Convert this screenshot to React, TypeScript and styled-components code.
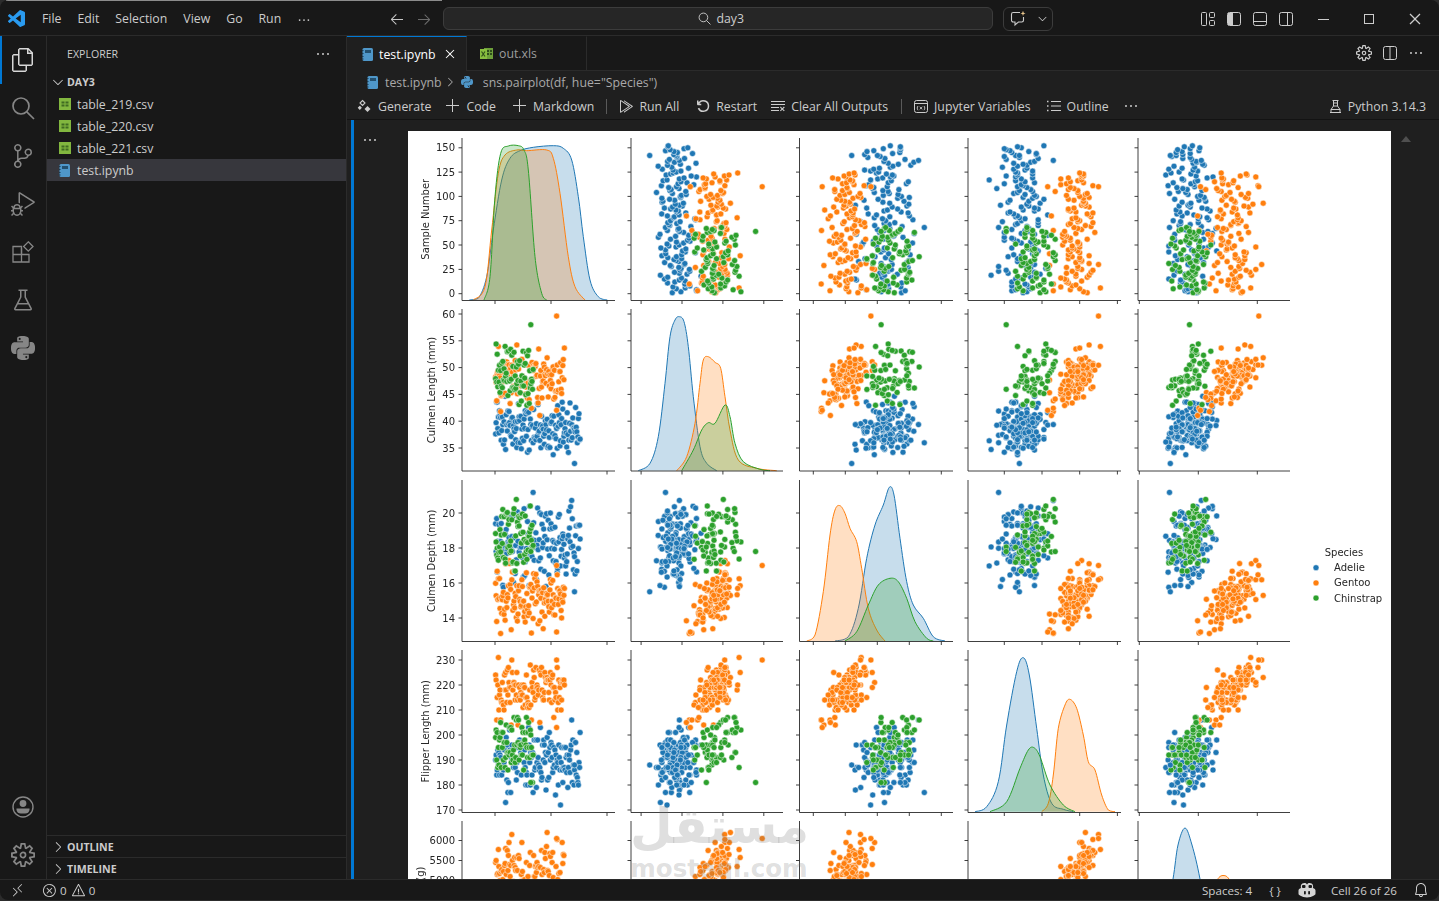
import React from 'react';
import styled, { createGlobalStyle } from 'styled-components';
import {
  VscAdd,
  VscArrowLeft,
  VscArrowRight,
  VscBeaker,
  VscBell,
  VscChevronDown,
  VscChevronRight,
  VscChromeClose,
  VscChromeMaximize,
  VscChromeMinimize,
  VscClearAll,
  VscClose,
  VscDebugAlt,
  VscDebugRestart,
  VscEllipsis,
  VscError,
  VscFiles,
  VscRemote,
  VscRunAll,
  VscSettingsGear,
  VscSourceControl,
  VscWarning,
} from 'react-icons/vsc';
import { SiPython } from 'react-icons/si';

const UI_FONT = '"Open Sans", "Noto Sans", sans-serif';

const GlobalStyle = createGlobalStyle`
  html, body {
    margin: 0;
    height: 100%;
    overflow: hidden;
    background: #2c2c2c;
  }
  #root {
    height: 100%;
  }
`;

const Window = styled.div`
  position: relative;
  display: flex;
  flex-direction: column;
  height: 900px;
  background: #181818;
  border-radius: 8px;
  overflow: hidden;
  font-family: ${UI_FONT};
  font-size: 12.3px;
  color: #cccccc;
`;

const TopGlint = styled.div`
  position: absolute;
  top: 0;
  left: 6px;
  width: 436px;
  height: 1px;
  background: #8c8c8c;
`;

const TitleBar = styled.header`
  display: flex;
  align-items: center;
  flex: 0 0 36px;
  box-sizing: border-box;
  padding-top: 2px;
  border-bottom: 1px solid #2b2b2b;
  position: relative;
`;

const AppLogo = styled.svg`
  width: 17px;
  height: 17px;
  margin: 0 9px 0 8px;
  fill: #2a9bf0;
`;

const MenuItem = styled.span`
  padding: 0 8px;
  line-height: 33px;
  white-space: nowrap;
`;

const NavArrows = styled.div`
  display: flex;
  align-items: center;
  gap: 11px;
  margin-left: 70px;
  width: 49px;
  flex-shrink: 0;
`;

const NavArrow = styled.span<{ dim?: boolean }>`
  display: flex;
  color: ${(p) => (p.dim ? '#6b6b6b' : '#c8c8c8')};
`;

const CommandCenter = styled.div`
  display: flex;
  align-items: center;
  justify-content: center;
  gap: 5px;
  flex: 0 0 550px;
  height: 23px;
  margin-left: 5px;
  padding-left: 6px;
  box-sizing: border-box;
  background: #262626;
  border: 1px solid #3c3c3c;
  border-radius: 6px;
  color: #cccccc;
`;

const ChatButton = styled.div`
  display: flex;
  align-items: center;
  gap: 9px;
  flex: 0 0 50px;
  height: 24px;
  margin-left: 10px;
  padding-left: 6px;
  box-sizing: border-box;
  border: 1px solid #3c3c3c;
  border-radius: 6px;
  color: #cccccc;
`;

const LayoutIcons = styled.div`
  display: flex;
  align-items: center;
  gap: 10px;
  margin-left: auto;
`;

const WindowControls = styled.div`
  display: flex;
  margin: 0 1px 0 6px;
  color: #cccccc;
`;

const WindowControl = styled.span`
  display: flex;
  align-items: center;
  justify-content: center;
  width: 46px;
  height: 33px;
`;

const Main = styled.div`
  display: flex;
  flex: 1;
  min-height: 0;
`;

const ActivityBar = styled.nav`
  display: flex;
  flex-direction: column;
  flex: 0 0 47px;
  box-sizing: border-box;
  border-right: 1px solid #2b2b2b;
`;

const ActivityItem = styled.div<{ active?: boolean }>`
  display: flex;
  align-items: center;
  justify-content: center;
  height: 48px;
  box-sizing: border-box;
  color: ${(p) => (p.active ? '#d7d7d7' : '#868686')};
  border-left: 2px solid ${(p) => (p.active ? '#0078d4' : 'transparent')};
  padding-right: 2px;
`;

const ActivitySpacer = styled.div`
  flex: 1;
`;

const SideBar = styled.aside`
  display: flex;
  flex-direction: column;
  flex: 0 0 300px;
  box-sizing: border-box;
  border-right: 1px solid #2b2b2b;
`;

const SideHeader = styled.div`
  display: flex;
  align-items: center;
  justify-content: space-between;
  height: 35px;
  padding: 0 15px 0 20px;
  font-size: 10.6px;
`;

const FolderRow = styled.div`
  display: flex;
  align-items: center;
  gap: 1px;
  height: 22px;
  padding-left: 3px;
  font-size: 10.6px;
  font-weight: 700;
`;

const FileRow = styled.div<{ selected?: boolean }>`
  display: flex;
  align-items: center;
  gap: ${(p) => (p.selected ? 7 : 6)}px;
  height: 22px;
  padding-left: 12px;
  background: ${(p) => (p.selected ? '#37373d' : 'transparent')};
`;

const SideFill = styled.div`
  flex: 1;
`;

const PaneHeader = styled.div`
  display: flex;
  align-items: center;
  gap: 1px;
  height: 22px;
  box-sizing: border-box;
  padding-left: 3px;
  border-top: 1px solid #2b2b2b;
  font-size: 10.6px;
  font-weight: 700;
`;

const Editor = styled.section`
  display: flex;
  flex-direction: column;
  flex: 1;
  min-width: 0;
  background: #1f1f1f;
`;

const TabBar = styled.div`
  display: flex;
  flex: 0 0 35px;
  box-sizing: border-box;
  background: #181818;
  border-bottom: 1px solid #2b2b2b;
`;

const Tab = styled.div<{ active?: boolean; width: number }>`
  display: flex;
  align-items: center;
  gap: 6px;
  width: ${(p) => p.width}px;
  box-sizing: border-box;
  padding-left: ${(p) => (p.active ? 15 : 13)}px;
  margin-bottom: ${(p) => (p.active ? -1 : 0)}px;
  background: ${(p) => (p.active ? '#1f1f1f' : '#181818')};
  color: ${(p) => (p.active ? '#ffffff' : '#9d9d9d')};
  border-top: 1px solid ${(p) => (p.active ? '#0078d4' : 'transparent')};
  border-right: 1px solid #2b2b2b;
`;

const TabActions = styled.div`
  display: flex;
  align-items: center;
  gap: 10px;
  margin-left: auto;
  padding-right: 15px;
  color: #cccccc;
`;

const Breadcrumbs = styled.div`
  display: flex;
  align-items: center;
  flex: 0 0 22px;
  padding-left: 20px;
  gap: 7px;
  color: #a9a9a9;
`;

const CrumbChevron = styled.span`
  display: flex;
  margin: 0 -3px 0 -6px;
`;

const ToolbarWrap = styled.div`
  display: flex;
  align-items: center;
  flex: 0 0 27px;
  box-sizing: border-box;
  padding: 0 13px 0 10px;
  border-bottom: 1px solid #131313;
`;

const ToolButton = styled.div<{ gap?: number }>`
  display: flex;
  align-items: center;
  gap: 5px;
  margin-right: ${(p) => p.gap ?? 15}px;
  white-space: nowrap;
`;

const ToolSeparator = styled.span`
  width: 1px;
  height: 15px;
  margin-right: 11px;
  background: #5a5a5a;
`;

const KernelPicker = styled(ToolButton)`
  margin-left: auto;
  margin-right: 0;
`;

const NotebookBody = styled.div`
  display: flex;
  flex: 1;
  min-height: 0;
`;

const CellBar = styled.div`
  flex: 0 0 3px;
  margin-left: 4px;
  background: #0078d4;
`;

const CellGutter = styled.div`
  display: flex;
  justify-content: center;
  flex: 0 0 54px;
  padding-top: 12px;
  padding-right: 23px;
  box-sizing: border-box;
  color: #cccccc;
`;

const Output = styled.div`
  position: relative;
  flex: 0 0 983px;
  margin-top: 11px;
  background: #ffffff;
  overflow: hidden;
`;

const PlotSvg = styled.svg`
  display: block;
  filter: blur(0.35px);
`;

const Watermark = styled.div`
  position: absolute;
  left: 222px;
  top: 664px;
  width: 178px;
  text-align: center;
  font-family: "DejaVu Sans", sans-serif;
  font-weight: 700;
  color: rgba(120, 120, 120, 0.24);
  pointer-events: none;
`;

const WatermarkArabic = styled.div`
  font-size: 49px;
  line-height: 64px;
`;

const WatermarkLatin = styled.div`
  font-size: 24.5px;
  line-height: 20px;
`;

const ScrollArrow = styled.div`
  width: 0;
  height: 0;
  margin: 16px 0 0 10px;
  border-left: 5px solid transparent;
  border-right: 5px solid transparent;
  border-bottom: 6px solid #4f4f4f;
`;

const StatusBar = styled.footer`
  display: flex;
  align-items: center;
  flex: 0 0 21px;
  box-sizing: border-box;
  border-top: 1px solid #2b2b2b;
  padding: 0 10px;
  font-size: 11.6px;
`;

const StatusItem = styled.span<{ gap?: number }>`
  display: flex;
  align-items: center;
  gap: 3px;
  margin-right: ${(p) => p.gap ?? 0}px;
`;

const StatusRight = styled.div`
  display: flex;
  align-items: center;
  margin-left: auto;
`;

const TickLabel = styled.text<{ anchor?: string }>`
  font-family: "DejaVu Sans", sans-serif;
  font-size: 10px;
  fill: #262626;
  text-anchor: ${(p) => p.anchor ?? 'end'};
`;

// file type icons seen in the explorer and tabs
const CsvIcon = () => (
  <svg width="12" height="12" viewBox="0 0 12 12">
    <rect width="12" height="12" fill="#82b73f" />
    <path d="M2.5 3.5h3v2h-3zM6.5 3.5h3v2h-3zM2.5 6.5h3v2h-3zM6.5 6.5h3v2h-3z" fill="#3f6b22" />
  </svg>
);

const XlsIcon = () => (
  <svg width="13" height="13" viewBox="0 0 13 13">
    <rect x="4" y="1" width="9" height="11" fill="#6d9f3a" />
    <path d="M7 3h2v2H7zM10 3h2v2h-2zM7 6h2v2H7zM10 6h2v2h-2z" fill="#2f4f1b" />
    <rect x="0" y="2" width="7" height="10" fill="#89bf3f" />
    <path d="M1.5 4.5l3.5 5M5 4.5l-3.5 5" stroke="#2f4f1b" strokeWidth="1.2" />
  </svg>
);

const NotebookIcon = () => (
  <svg width="11" height="13" viewBox="0 0 11 13">
    <rect x="0.5" width="10.5" height="13" rx="1.5" fill="#4f97c9" />
    <rect x="3" y="2" width="6" height="3" fill="#23506f" />
    <path d="M0 2.5h1.5M0 5.5h1.5M0 8.5h1.5M0 11h1.5" stroke="#1b3a50" />
  </svg>
);

const SearchIcon: React.FC<{ size: number }> = ({ size }) => (
  <svg width={size} height={size} viewBox="0 0 24 24" fill="none" stroke="currentColor" strokeWidth="1.7">
    <circle cx="10" cy="10" r="8" />
    <path d="M15.800 15.800L23 23" />
  </svg>
);

const ExtensionsIcon = () => (
  <svg width="24" height="24" viewBox="0 0 24 24" fill="none" stroke="currentColor" strokeWidth="1.3">
    <path d="M2 6.500h8.500V22H2zM2 14.500h16V22h-7.500" />
    <path d="M10.500 14.500V8" />
    <path d="M17.300 1.800l4.700 4.700-4.700 4.700-4.700-4.700z" />
  </svg>
);

const AccountIcon = () => (
  <svg width="24" height="24" viewBox="0 0 24 24">
    <circle cx="12" cy="12" r="10" fill="none" stroke="currentColor" strokeWidth="1.4" />
    <circle cx="12" cy="8.500" r="3.400" fill="currentColor" />
    <path d="M5.500 13.500h13v1.500a4.500 4.500 0 0 1-4.500 3.500h-4A4.500 4.500 0 0 1 5.500 15z" fill="currentColor" />
  </svg>
);

const CustomizeLayoutIcon = () => (
  <svg width="16" height="16" viewBox="0 0 16 16" fill="none" stroke="#cccccc">
    <rect x="1.5" y="1.5" width="5" height="13" rx="1" />
    <rect x="9.5" y="1.5" width="5" height="5" rx="1" />
    <rect x="9.5" y="9.5" width="5" height="5" rx="1" />
  </svg>
);

const SidebarLayoutIcon = () => (
  <svg width="16" height="16" viewBox="0 0 16 16" fill="none" stroke="#cccccc">
    <rect x="1.5" y="1.5" width="13" height="13" rx="2" />
    <path d="M2 2h5v12H2z" fill="#cccccc" stroke="none" />
  </svg>
);

const PanelLayoutIcon = () => (
  <svg width="16" height="16" viewBox="0 0 16 16" fill="none" stroke="#cccccc">
    <rect x="1.5" y="1.5" width="13" height="13" rx="2" />
    <path d="M2 10.5h12" />
  </svg>
);

const SecondaryLayoutIcon = () => (
  <svg width="16" height="16" viewBox="0 0 16 16" fill="none" stroke="#cccccc">
    <rect x="1.5" y="1.5" width="13" height="13" rx="2" />
    <path d="M9.5 2v12" />
  </svg>
);

const SplitEditorIcon = () => (
  <svg width="16" height="16" viewBox="0 0 16 16" fill="none" stroke="#cccccc">
    <rect x="1.5" y="1.5" width="13" height="13" rx="2" />
    <path d="M8 2v12" />
  </svg>
);

const ChatIcon = () => (
  <svg width="17" height="17" viewBox="0 0 17 17" fill="none" stroke="#cccccc" strokeWidth="1.1">
    <path d="M10 2.5H3.2A1.7 1.7 0 0 0 1.5 4.2v6.1A1.7 1.7 0 0 0 3.2 12H5v3l3.4-3h3.4a1.7 1.7 0 0 0 1.7-1.7V7" />
    <path d="M13 .8l.7 1.9 1.9.7-1.9.7-.7 1.9-.7-1.9-1.9-.7 1.9-.7z" fill="#e8c58c" stroke="none" />
  </svg>
);

const GenerateIcon = () => (
  <svg width="16" height="16" viewBox="0 0 16 16" fill="none" stroke="#cccccc" strokeWidth="1.1">
    <path d="M5.5 2.5l2.5 2.5-2.5 2.5L3 5z" />
    <path d="M2.8 8.5l1.3 1.3-1.3 1.3-1.3-1.3z" fill="#cccccc" />
    <path d="M10.5 8l3 3-3 3-3-3z" fill="#cccccc" stroke="none" />
  </svg>
);

const VariablesIcon = () => (
  <svg width="16" height="15" viewBox="0 0 15 15" fill="none" stroke="#cccccc">
    <rect x="1" y="1.5" width="13" height="12" rx="2" />
    <path d="M1 4.5h13" />
    <path d="M4.5 7c-1 1.2-1 3 0 4.2M10.5 7c1 1.2 1 3 0 4.2M6.2 7.8l2.6 2.6M8.8 7.8l-2.6 2.6" strokeWidth="0.9" />
  </svg>
);

const OutlineIcon = () => (
  <svg width="16" height="16" viewBox="0 0 16 16" fill="none" stroke="#cccccc">
    <path d="M5 3.500h10M5 8h10M5 12.500h10" />
    <path d="M1 3.500h1.500M1 8h1.500M1 12.500h1.500" strokeWidth="1.500" />
  </svg>
);

const KernelIcon = () => (
  <svg width="15" height="15" viewBox="0 0 15 15" fill="none" stroke="#cccccc">
    <path d="M4.5 1.5h6M5.5 1.5v5.5L3 10.5M9.5 1.5v5.5l2.5 3.5M2 13.5h11M3 10.5h9v3H3zM5.5 4h4M5.5 7h4" />
  </svg>
);

const BotIcon = () => (
  <svg width="18" height="16" viewBox="0 0 18 16">
    <path d="M3 6c-.5-2 0-5 3.500-5 1.500 0 2 .6 2.500 1.500C9.500 1.600 10 1 11.500 1 15 1 15.500 4 15 6c1.500.6 2.500 1.500 2.500 2.500v3c0 1-.6 1.500-1.500 2C14 14.600 11.500 15.500 9 15.500s-5-.9-7-2c-.9-.5-1.500-1-1.500-2v-3C.5 7.500 1.500 6.600 3 6z" fill="#d4d4d4" />
    <rect x="4" y="3" width="3.500" height="3" rx="1" fill="#181818" />
    <rect x="10.500" y="3" width="3.500" height="3" rx="1" fill="#181818" />
    <rect x="6" y="9" width="1.800" height="3.500" rx=".8" fill="#181818" />
    <rect x="10.200" y="9" width="1.800" height="3.500" rx=".8" fill="#181818" />
  </svg>
);

// seeded generator so the scatter clouds stay the same between renders
const makeRandom = (seed: number) => {
  let s = seed;
  return () => {
    s = (s + 0x6d2b79f5) | 0;
    let t = Math.imul(s ^ (s >>> 15), 1 | s);
    t = (t + Math.imul(t ^ (t >>> 7), 61 | t)) ^ t;
    return ((t ^ (t >>> 14)) >>> 0) / 4294967296;
  };
};

const random = makeRandom(2718);
const gauss = () =>
  Math.sqrt(-2 * Math.log(random() + 1e-9)) * Math.cos(2 * Math.PI * random());

interface Sample {
  species: number;
  values: number[];
}

const between = (mean: number, sd: number, load: number, z: number, lo: number, hi: number) => {
  for (let i = 0; i < 20; i++) {
    const v = mean + sd * (load * z + Math.sqrt(1 - load * load) * gauss());
    if (v >= lo && v <= hi) return v;
  }
  return mean;
};

const samples: Sample[] = [];

for (let i = 1; i <= 152; i += 1) {
  const z = gauss();
  samples.push({
    species: 0,
    values: [
      i,
      between(39, 3, 0.45, z, 33.5, 46),
      between(18.3, 1.2, 0.55, z, 15.7, 21.5),
      Math.round(between(190, 6.6, 0.5, z, 172, 210)),
      Math.round(between(3700, 460, 0.75, z, 2850, 4775) / 25) * 25,
    ],
  });
}
for (let i = 1; i <= 124; i += 1) {
  const z = gauss();
  samples.push({
    species: 1,
    values: [
      i,
      between(47.4, 3, 0.75, z, 40.9, 55.9),
      between(15, 1, 0.8, z, 13.1, 17.3),
      Math.round(between(217, 6.4, 0.8, z, 203, 231)),
      Math.round(between(5070, 500, 0.85, z, 3950, 6300) / 25) * 25,
    ],
  });
}
for (let i = 1; i <= 68; i += 1) {
  const male = i % 2 === 0;
  const z = gauss() * 0.7 + (male ? 0.7 : -0.7);
  samples.push({
    species: 2,
    values: [
      i,
      between(male ? 51 : 46.5, 1.7, 0.1, z, 40.9, 55),
      between(18.4, 1.1, 0.75, z, 16.4, 20.8),
      Math.round(between(196, 6.5, 0.7, z, 178, 212)),
      Math.round(between(3730, 380, 0.75, z, 2700, 4800) / 25) * 25,
    ],
  });
}
samples.push({ species: 1, values: [110, 59.6, 17, 230, 6050] });
samples.push({ species: 2, values: [64, 58, 17.8, 181, 3700] });
samples.push({ species: 0, values: [142, 32.1, 15.5, 188, 3050] });

const colors = ['#1f77b4', '#ff7f0e', '#2ca02c'];

// every column/row of the grid: screen box, value scale and tick values
const axes = [
  {
    label: 'Sample Number',
    labelX: 425,
    left: 462,
    right: 615,
    top: 138,
    bottom: 300.5,
    x: (v: number) => 495 + 0.56 * v,
    y: (v: number) => 293.7 - 0.973 * v,
    xTicks: [0, 100, 200],
    yTicks: [0, 25, 50, 75, 100, 125, 150],
  },
  {
    label: 'Culmen Length (mm)',
    labelX: 431,
    left: 631,
    right: 783,
    top: 309,
    bottom: 471,
    x: (v: number) => 682 + 4.09 * (v - 40),
    y: (v: number) => 314 + (60 - v) * 5.36,
    xTicks: [30, 40, 50, 60],
    yTicks: [35, 40, 45, 50, 55, 60],
  },
  {
    label: 'Culmen Depth (mm)',
    labelX: 431,
    left: 799.5,
    right: 953,
    top: 480,
    bottom: 641.5,
    x: (v: number) => 845.3 + 12.8 * (v - 15),
    y: (v: number) => 513 + (20 - v) * 17.5,
    xTicks: [12.5, 15, 17.5, 20, 22.5],
    yTicks: [14, 16, 18, 20],
  },
  {
    label: 'Flipper Length (mm)',
    labelX: 425,
    left: 968,
    right: 1121,
    top: 650,
    bottom: 812.5,
    x: (v: number) => 1004.3 + 1.885 * (v - 180),
    y: (v: number) => 660 + (230 - v) * 2.5,
    xTicks: [180, 200, 220, 240],
    yTicks: [170, 180, 190, 200, 210, 220, 230],
  },
  {
    label: 'Body Mass (g)',
    labelX: 420,
    left: 1138,
    right: 1290,
    top: 821,
    bottom: 983,
    x: (v: number) => 1198.3 + 0.0295 * (v - 4000),
    y: (v: number) => 840.5 + (6000 - v) * 0.04,
    xTicks: [2000, 4000, 6000],
    yTicks: [3000, 3500, 4000, 4500, 5000, 5500, 6000],
  },
];

type Pt = [number, number];

const fromZoom = (ox: number, oy: number, pts: number[]): Pt[] => {
  const out: Pt[] = [];
  for (let i = 0; i < pts.length; i += 2) out.push([ox + pts[i] / 3, oy + pts[i + 1] / 3]);
  return out;
};

// density curves read off the reference, in blue, orange, green order
const kdes: Pt[][][] = [
  [
    fromZoom(410, 130, [178, 510, 205, 505, 230, 440, 250, 300, 275, 150, 300, 85, 330, 62, 370, 52, 430, 47, 460, 55, 485, 90, 505, 200, 520, 320, 540, 450, 565, 500, 592, 510]),
    fromZoom(410, 130, [190, 510, 225, 470, 245, 300, 265, 130, 285, 75, 320, 60, 350, 62, 410, 60, 430, 85, 450, 190, 475, 380, 495, 470, 525, 510]),
    fromZoom(410, 130, [222, 510, 240, 440, 255, 200, 272, 70, 295, 48, 325, 47, 342, 60, 355, 120, 375, 380, 395, 490, 410, 510]),
  ],
  [
    fromZoom(410, 130, [685, 1022, 720, 1000, 745, 920, 765, 760, 780, 620, 795, 570, 808, 560, 822, 575, 835, 650, 850, 800, 870, 950, 890, 1000, 920, 1022]),
    fromZoom(410, 130, [800, 1022, 830, 980, 855, 880, 870, 760, 880, 690, 895, 680, 915, 697, 932, 715, 945, 800, 960, 900, 985, 990, 1040, 1015, 1100, 1022]),
    fromZoom(410, 130, [815, 1022, 850, 960, 875, 900, 895, 878, 915, 880, 945, 825, 960, 860, 975, 940, 1000, 995, 1050, 1018, 1080, 1022]),
  ],
  [
    fromZoom(790, 475, [135, 498, 175, 485, 205, 400, 230, 250, 255, 150, 280, 90, 298, 37, 312, 60, 330, 190, 350, 320, 370, 390, 400, 430, 430, 485, 465, 498]),
    fromZoom(790, 475, [50, 498, 75, 480, 100, 350, 120, 180, 135, 105, 150, 92, 165, 115, 180, 160, 200, 200, 215, 280, 235, 400, 260, 465, 285, 498]),
    fromZoom(790, 475, [165, 498, 200, 470, 235, 390, 265, 330, 300, 310, 325, 320, 350, 370, 375, 440, 410, 490, 430, 498]),
  ],
  [
    fromZoom(790, 475, [555, 1010, 590, 995, 625, 920, 650, 750, 680, 590, 700, 548, 718, 600, 740, 760, 760, 900, 785, 985, 820, 1003, 850, 1010]),
    fromZoom(790, 475, [755, 1010, 775, 985, 790, 900, 805, 760, 825, 690, 840, 673, 860, 700, 880, 780, 895, 860, 915, 885, 935, 960, 955, 1005, 975, 1010]),
    fromZoom(790, 475, [600, 1010, 650, 980, 690, 880, 715, 825, 732, 818, 750, 845, 780, 930, 820, 990, 855, 1010]),
  ],
  [
    [[1150, 983], [1165, 920], [1173, 879], [1178, 845], [1185, 828], [1192, 845], [1200, 879], [1208, 930], [1222, 983]],
    [[1195, 983], [1207, 920], [1215, 885], [1223, 875.5], [1232, 885], [1245, 930], [1262, 983]],
    [[1155, 983], [1170, 930], [1186, 900], [1200, 930], [1218, 983]],
  ],
];

const smooth = (pts: Pt[]) => {
  let d = `M${pts[0][0].toFixed(1)} ${pts[0][1].toFixed(1)}`;
  for (let i = 0; i < pts.length - 1; i += 1) {
    const p0 = pts[Math.max(i - 1, 0)];
    const p1 = pts[i];
    const p2 = pts[i + 1];
    const p3 = pts[Math.min(i + 2, pts.length - 1)];
    const c1x = p1[0] + (p2[0] - p0[0]) / 6;
    const c1y = Math.min(p1[1] + (p2[1] - p0[1]) / 6, pts[0][1]);
    const c2x = p2[0] - (p3[0] - p1[0]) / 6;
    const c2y = Math.min(p2[1] - (p3[1] - p1[1]) / 6, pts[0][1]);
    d += `C${c1x.toFixed(1)} ${c1y.toFixed(1)} ${c2x.toFixed(1)} ${c2y.toFixed(1)} ${p2[0].toFixed(1)} ${p2[1].toFixed(1)}`;
  }
  return d;
};

const Frame: React.FC<{ row: number; col: number }> = ({ row, col }) => {
  const r = axes[row];
  const c = axes[col];
  return (
    <g stroke="#2a2a2a" strokeWidth="0.9" fill="none">
      <path d={`M${c.left} ${r.top}V${r.bottom}H${c.right}`} />
      {r.yTicks.map((t) => (
        <path key={t} d={`M${c.left - 3.5} ${r.y(t).toFixed(1)}H${c.left}`} />
      ))}
      {c.xTicks.map((t) => (
        <path key={t} d={`M${c.x(t).toFixed(1)} ${r.bottom}v3.500`} />
      ))}
    </g>
  );
};

const Scatter: React.FC<{ row: number; col: number }> = ({ row, col }) => (
  <g stroke="#ffffff" strokeWidth="0.5">
    {samples.map((s, i) => (
      <circle
        key={i}
        cx={axes[col].x(s.values[col]).toFixed(1)}
        cy={axes[row].y(s.values[row]).toFixed(1)}
        r="3"
        fill={colors[s.species]}
      />
    ))}
  </g>
);

const Density: React.FC<{ index: number }> = ({ index }) => (
  <g strokeWidth="1">
    {kdes[index].map((curve, s) => (
      <path
        key={s}
        d={smooth(curve)}
        fill={colors[s]}
        fillOpacity="0.25"
        stroke={colors[s]}
      />
    ))}
  </g>
);

const PairPlot = () => (
  <PlotSvg width="983" height="748" viewBox="408 131 983 748">
    {axes.map((r, row) => (
      <g key={r.label}>
        {axes.map((c, col) => (
          <g key={c.label}>
            {row === col ? <Density index={row} /> : <Scatter row={row} col={col} />}
            <Frame row={row} col={col} />
          </g>
        ))}
        {r.yTicks
          .filter((t) => r.y(t) < 890)
          .map((t) => (
            <TickLabel key={t} x={455} y={r.y(t) + 3.6}>
              {t}
            </TickLabel>
          ))}
        <TickLabel
          anchor="middle"
          transform={`translate(${r.labelX + 3.500} ${(r.top + r.bottom) / 2}) rotate(-90)`}
        >
          {r.label}
        </TickLabel>
      </g>
    ))}
    <TickLabel anchor="middle" x={1344} y={556}>
      Species
    </TickLabel>
    {['Adelie', 'Gentoo', 'Chinstrap'].map((name, i) => {
      const y = 567.7 + i * 15.2;
      return (
        <g key={name}>
          <circle cx={1316} cy={y} r="3" fill={colors[i]} stroke="#ffffff" strokeWidth="0.5" />
          <TickLabel anchor="start" x={1334} y={y + 3.5}>
            {name}
          </TickLabel>
        </g>
      );
    })}
  </PlotSvg>
);

const menus = ['File', 'Edit', 'Selection', 'View', 'Go', 'Run'];
const csvFiles = ['table_219.csv', 'table_220.csv', 'table_221.csv'];

const App: React.FC = () => (
  <>
    <GlobalStyle />
    <Window>
      <TopGlint />
      <TitleBar>
        <AppLogo viewBox="0 0 24 24">
          <path d="M23.15 2.587L18.21.21a1.494 1.494 0 0 0-1.705.29l-9.46 8.63-4.12-3.128a.999.999 0 0 0-1.276.057L.327 7.261A1 1 0 0 0 .326 8.74L3.899 12 .326 15.26a1 1 0 0 0 .001 1.479L1.65 17.94a.999.999 0 0 0 1.276.057l4.12-3.128 9.46 8.63a1.492 1.492 0 0 0 1.704.29l4.942-2.377A1.5 1.5 0 0 0 24 20.06V3.939a1.5 1.5 0 0 0-.85-1.352zm-5.146 14.861L10.826 12l7.178-5.448v10.896z" />
        </AppLogo>
        {menus.map((m) => (
          <MenuItem key={m}>{m}</MenuItem>
        ))}
        <MenuItem>
          <VscEllipsis size={14} style={{ verticalAlign: 'middle' }} />
        </MenuItem>
        <NavArrows>
          <NavArrow>
            <VscArrowLeft size={16} />
          </NavArrow>
          <NavArrow dim>
            <VscArrowRight size={16} />
          </NavArrow>
        </NavArrows>
        <CommandCenter>
          <SearchIcon size={13} />
          day3
        </CommandCenter>
        <ChatButton>
          <ChatIcon />
          <VscChevronDown size={13} />
        </ChatButton>
        <LayoutIcons>
          <CustomizeLayoutIcon />
          <SidebarLayoutIcon />
          <PanelLayoutIcon />
          <SecondaryLayoutIcon />
        </LayoutIcons>
        <WindowControls>
          <WindowControl>
            <VscChromeMinimize size={16} />
          </WindowControl>
          <WindowControl>
            <VscChromeMaximize size={16} />
          </WindowControl>
          <WindowControl>
            <VscChromeClose size={16} />
          </WindowControl>
        </WindowControls>
      </TitleBar>
      <Main>
        <ActivityBar>
          <ActivityItem active>
            <VscFiles size={24} />
          </ActivityItem>
          <ActivityItem>
            <SearchIcon size={24} />
          </ActivityItem>
          <ActivityItem>
            <VscSourceControl size={24} />
          </ActivityItem>
          <ActivityItem>
            <VscDebugAlt size={24} />
          </ActivityItem>
          <ActivityItem>
            <ExtensionsIcon />
          </ActivityItem>
          <ActivityItem>
            <VscBeaker size={24} />
          </ActivityItem>
          <ActivityItem>
            <SiPython size={24} />
          </ActivityItem>
          <ActivitySpacer />
          <ActivityItem>
            <AccountIcon />
          </ActivityItem>
          <ActivityItem>
            <VscSettingsGear size={24} />
          </ActivityItem>
        </ActivityBar>
        <SideBar>
          <SideHeader>
            EXPLORER
            <VscEllipsis size={16} />
          </SideHeader>
          <FolderRow>
            <VscChevronDown size={16} />
            DAY3
          </FolderRow>
          {csvFiles.map((f) => (
            <FileRow key={f}>
              <CsvIcon />
              {f}
            </FileRow>
          ))}
          <FileRow selected>
            <NotebookIcon />
            test.ipynb
          </FileRow>
          <SideFill />
          <PaneHeader>
            <VscChevronRight size={16} />
            OUTLINE
          </PaneHeader>
          <PaneHeader>
            <VscChevronRight size={16} />
            TIMELINE
          </PaneHeader>
        </SideBar>
        <Editor>
          <TabBar>
            <Tab active width={120}>
              <NotebookIcon />
              test.ipynb
              <VscClose size={16} />
            </Tab>
            <Tab width={120}>
              <XlsIcon />
              out.xls
            </Tab>
            <TabActions>
              <VscSettingsGear size={16} />
              <SplitEditorIcon />
              <VscEllipsis size={16} />
            </TabActions>
          </TabBar>
          <Breadcrumbs>
            <NotebookIcon />
            test.ipynb
            <CrumbChevron>
              <VscChevronRight size={14} />
            </CrumbChevron>
            <SiPython size={12} color="#4f97c9" />
            &nbsp;sns.pairplot(df, hue="Species")
          </Breadcrumbs>
          <ToolbarWrap>
            <ToolButton gap={14}>
              <GenerateIcon />
              Generate
            </ToolButton>
            <ToolButton gap={16}>
              <VscAdd size={16} />
              Code
            </ToolButton>
            <ToolButton gap={12}>
              <VscAdd size={16} />
              Markdown
            </ToolButton>
            <ToolSeparator />
            <ToolButton gap={16}>
              <VscRunAll size={16} />
              Run All
            </ToolButton>
            <ToolButton gap={13}>
              <VscDebugRestart size={16} />
              Restart
            </ToolButton>
            <ToolButton gap={13}>
              <VscClearAll size={16} />
              Clear All Outputs
            </ToolButton>
            <ToolSeparator />
            <ToolButton gap={15}>
              <VariablesIcon />
              Jupyter Variables
            </ToolButton>
            <ToolButton gap={14}>
              <OutlineIcon />
              Outline
            </ToolButton>
            <ToolButton>
              <VscEllipsis size={16} />
            </ToolButton>
            <KernelPicker>
              <KernelIcon />
              Python 3.14.3
            </KernelPicker>
          </ToolbarWrap>
          <NotebookBody>
            <CellBar />
            <CellGutter>
              <VscEllipsis size={16} />
            </CellGutter>
            <Output>
              <PairPlot />
              <Watermark>
                <WatermarkArabic>مستقل</WatermarkArabic>
                <WatermarkLatin>mostaql.com</WatermarkLatin>
              </Watermark>
            </Output>
            <ScrollArrow />
          </NotebookBody>
        </Editor>
      </Main>
      <StatusBar>
        <StatusItem gap={17}>
          <VscRemote size={15} />
        </StatusItem>
        <StatusItem gap={4}>
          <VscError size={15} />0
        </StatusItem>
        <StatusItem>
          <VscWarning size={15} />0
        </StatusItem>
        <StatusRight>
          <StatusItem gap={17}>Spaces: 4</StatusItem>
          <StatusItem gap={17}>{'{ }'}</StatusItem>
          <StatusItem gap={15}>
            <BotIcon />
          </StatusItem>
          <StatusItem gap={16}>Cell 26 of 26</StatusItem>
          <StatusItem>
            <VscBell size={16} />
          </StatusItem>
        </StatusRight>
      </StatusBar>
    </Window>
  </>
);

export default App;
